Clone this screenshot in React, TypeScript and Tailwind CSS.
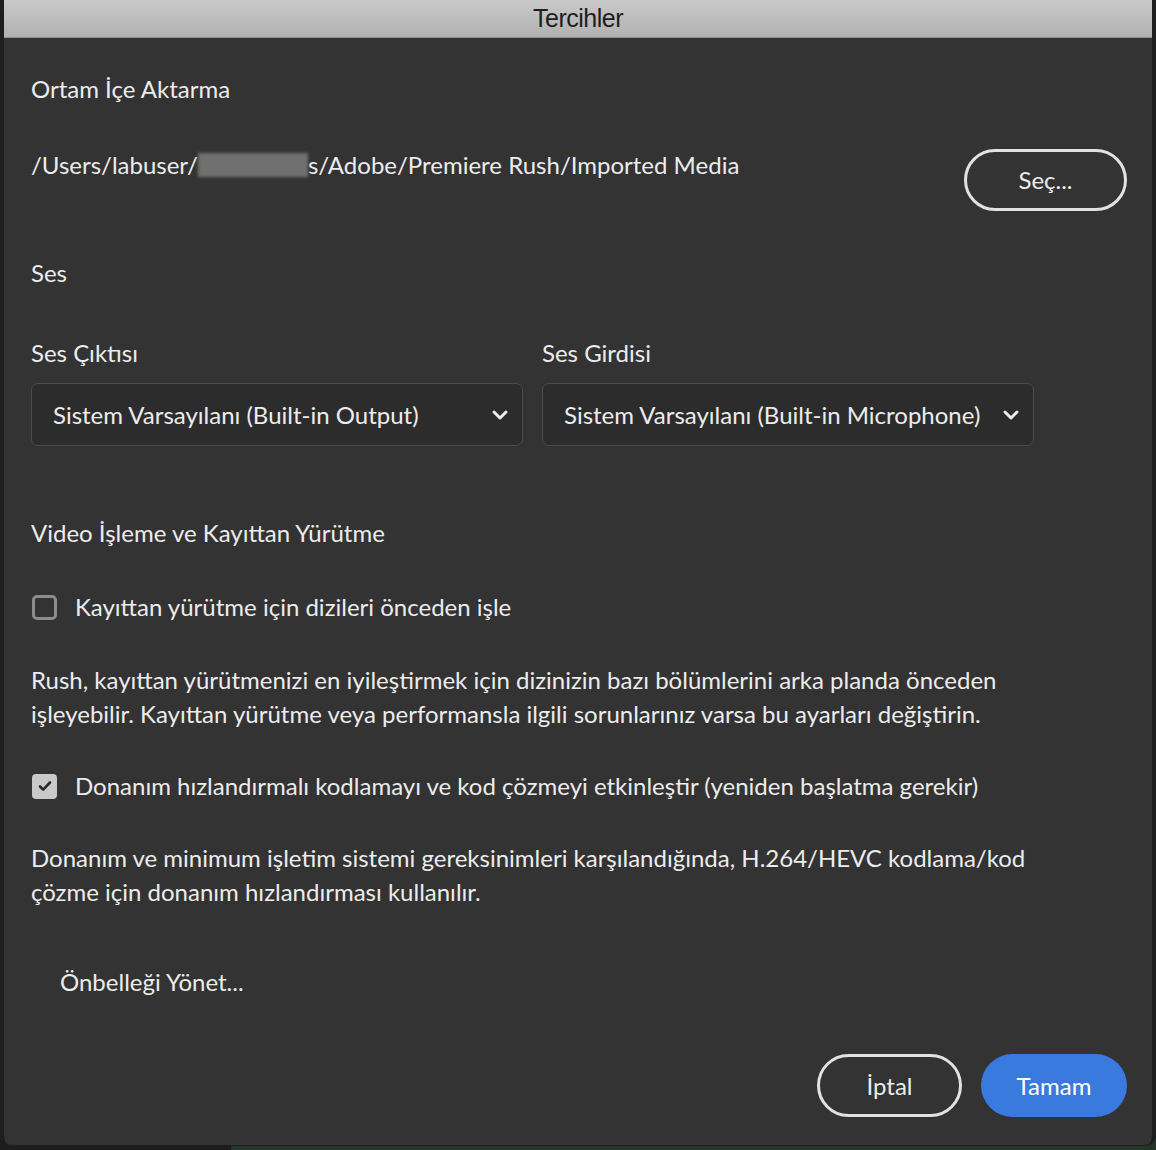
import React from "react";

function Chevron() {
  return (
    <svg width="20" height="20" viewBox="0 0 20 20" fill="none">
      <path d="M4 7l6 6 6-6" stroke="#ececec" strokeWidth="3" strokeLinecap="round" strokeLinejoin="round" />
    </svg>
  );
}

function Select({ label }: { label: string }) {
  return (
    <div className="flex h-[63px] w-[492px] items-center justify-between rounded-[7px] border-[1.5px] border-[#4b4b4b] bg-[#2c2c2c] pl-[21px] pr-[12px]">
      <span>{label}</span>
      <Chevron />
    </div>
  );
}

function Checkbox({ checked, label }: { checked?: boolean; label: string }) {
  return (
    <div className="flex h-[34px] items-center">
      {checked ? (
        <div className="ml-[1px] flex h-[25px] w-[25px] items-center justify-center rounded-[4px] bg-[#c9c9c9]">
          <svg width="16" height="16" viewBox="0 0 16 16" fill="none">
            <path d="M3 8.5l3.2 3.2L13 4.5" stroke="#2a2a2a" strokeWidth="2.6" strokeLinecap="round" strokeLinejoin="round" />
          </svg>
        </div>
      ) : (
        <div className="ml-[1px] h-[25px] w-[25px] rounded-[5px] border-[3px] border-[#8c8c8c]" />
      )}
      <span className="ml-[18px]">{label}</span>
    </div>
  );
}

export default function App() {
  return (
    <div className="h-[1150px] w-[1156px] bg-gradient-to-r from-[#1d1d1d] from-20% to-[#26352c] to-20% font-['Lato','Noto_Sans',sans-serif] text-[24px] text-[#ececec]">
      <div className="flex h-[1146px] flex-col overflow-hidden rounded-b-[10px] border-x-[4px] border-b border-[#1e1e1e] bg-[#333333]">
        {/* Title bar */}
        <div className="flex h-[38px] shrink-0 items-center justify-center border-b border-[#8e8e8e] bg-gradient-to-b from-[#c9c9c9] to-[#b1b1b1] font-['Liberation_Sans',sans-serif] text-[25px] tracking-[-0.5px] text-[#1e1e1e]">
          Tercihler
        </div>

        <div className="flex flex-col pl-[27px] pr-[25px]">
          <div className="mt-[34px] flex h-[34px] items-center">Ortam İçe Aktarma</div>

          <div className="mt-[42px] flex items-start justify-between">
            <div className="flex h-[34px] items-center">
              /Users/labuser/
              <span className="inline-block h-[24px] w-[110px] bg-[#707070] blur-[1.5px]" />
              s/Adobe/Premiere Rush/Imported Media
            </div>
            <button className="mt-[1px] flex h-[62px] w-[163px] items-center justify-center rounded-full border-[3px] border-[#e2e2e2] text-[24px]">
              Seç...
            </button>
          </div>

          <div className="mt-[45px] flex h-[34px] items-center">Ses</div>

          <div className="mt-[46px] flex gap-[19px]">
            <div className="flex flex-col">
              <div className="flex h-[34px] items-center">Ses Çıktısı</div>
              <div className="mt-[13px]">
                <Select label="Sistem Varsayılanı (Built-in Output)" />
              </div>
            </div>
            <div className="flex flex-col">
              <div className="flex h-[34px] items-center">Ses Girdisi</div>
              <div className="mt-[13px]">
                <Select label="Sistem Varsayılanı (Built-in Microphone)" />
              </div>
            </div>
          </div>

          <div className="mt-[70px] flex h-[34px] items-center">Video İşleme ve Kayıttan Yürütme</div>

          <div className="mt-[40px]">
            <Checkbox label="Kayıttan yürütme için dizileri önceden işle" />
          </div>

          <p className="mt-[39px] w-[1010px] leading-[34px]">
            Rush, kayıttan yürütmenizi en iyileştirmek için dizinizin bazı bölümlerini arka planda önceden
            işleyebilir. Kayıttan yürütme veya performansla ilgili sorunlarınız varsa bu ayarları değiştirin.
          </p>

          <div className="mt-[38px]">
            <Checkbox checked label="Donanım hızlandırmalı kodlamayı ve kod çözmeyi etkinleştir (yeniden başlatma gerekir)" />
          </div>

          <p className="mt-[38px] w-[1010px] leading-[34px]">
            Donanım ve minimum işletim sistemi gereksinimleri karşılandığında, H.264/HEVC kodlama/kod
            çözme için donanım hızlandırması kullanılır.
          </p>

          <div className="mt-[56px] flex h-[34px] items-center pl-[29px]">Önbelleği Yönet...</div>

          <div className="mt-[55px] flex justify-end gap-[19px]">
            <button className="flex h-[63px] w-[145px] items-center justify-center rounded-full border-[3px] border-[#e2e2e2]">
              İptal
            </button>
            <button className="flex h-[63px] w-[146px] items-center justify-center rounded-full bg-[#3a79dd] text-white">
              Tamam
            </button>
          </div>
        </div>
      </div>
    </div>
  );
}
